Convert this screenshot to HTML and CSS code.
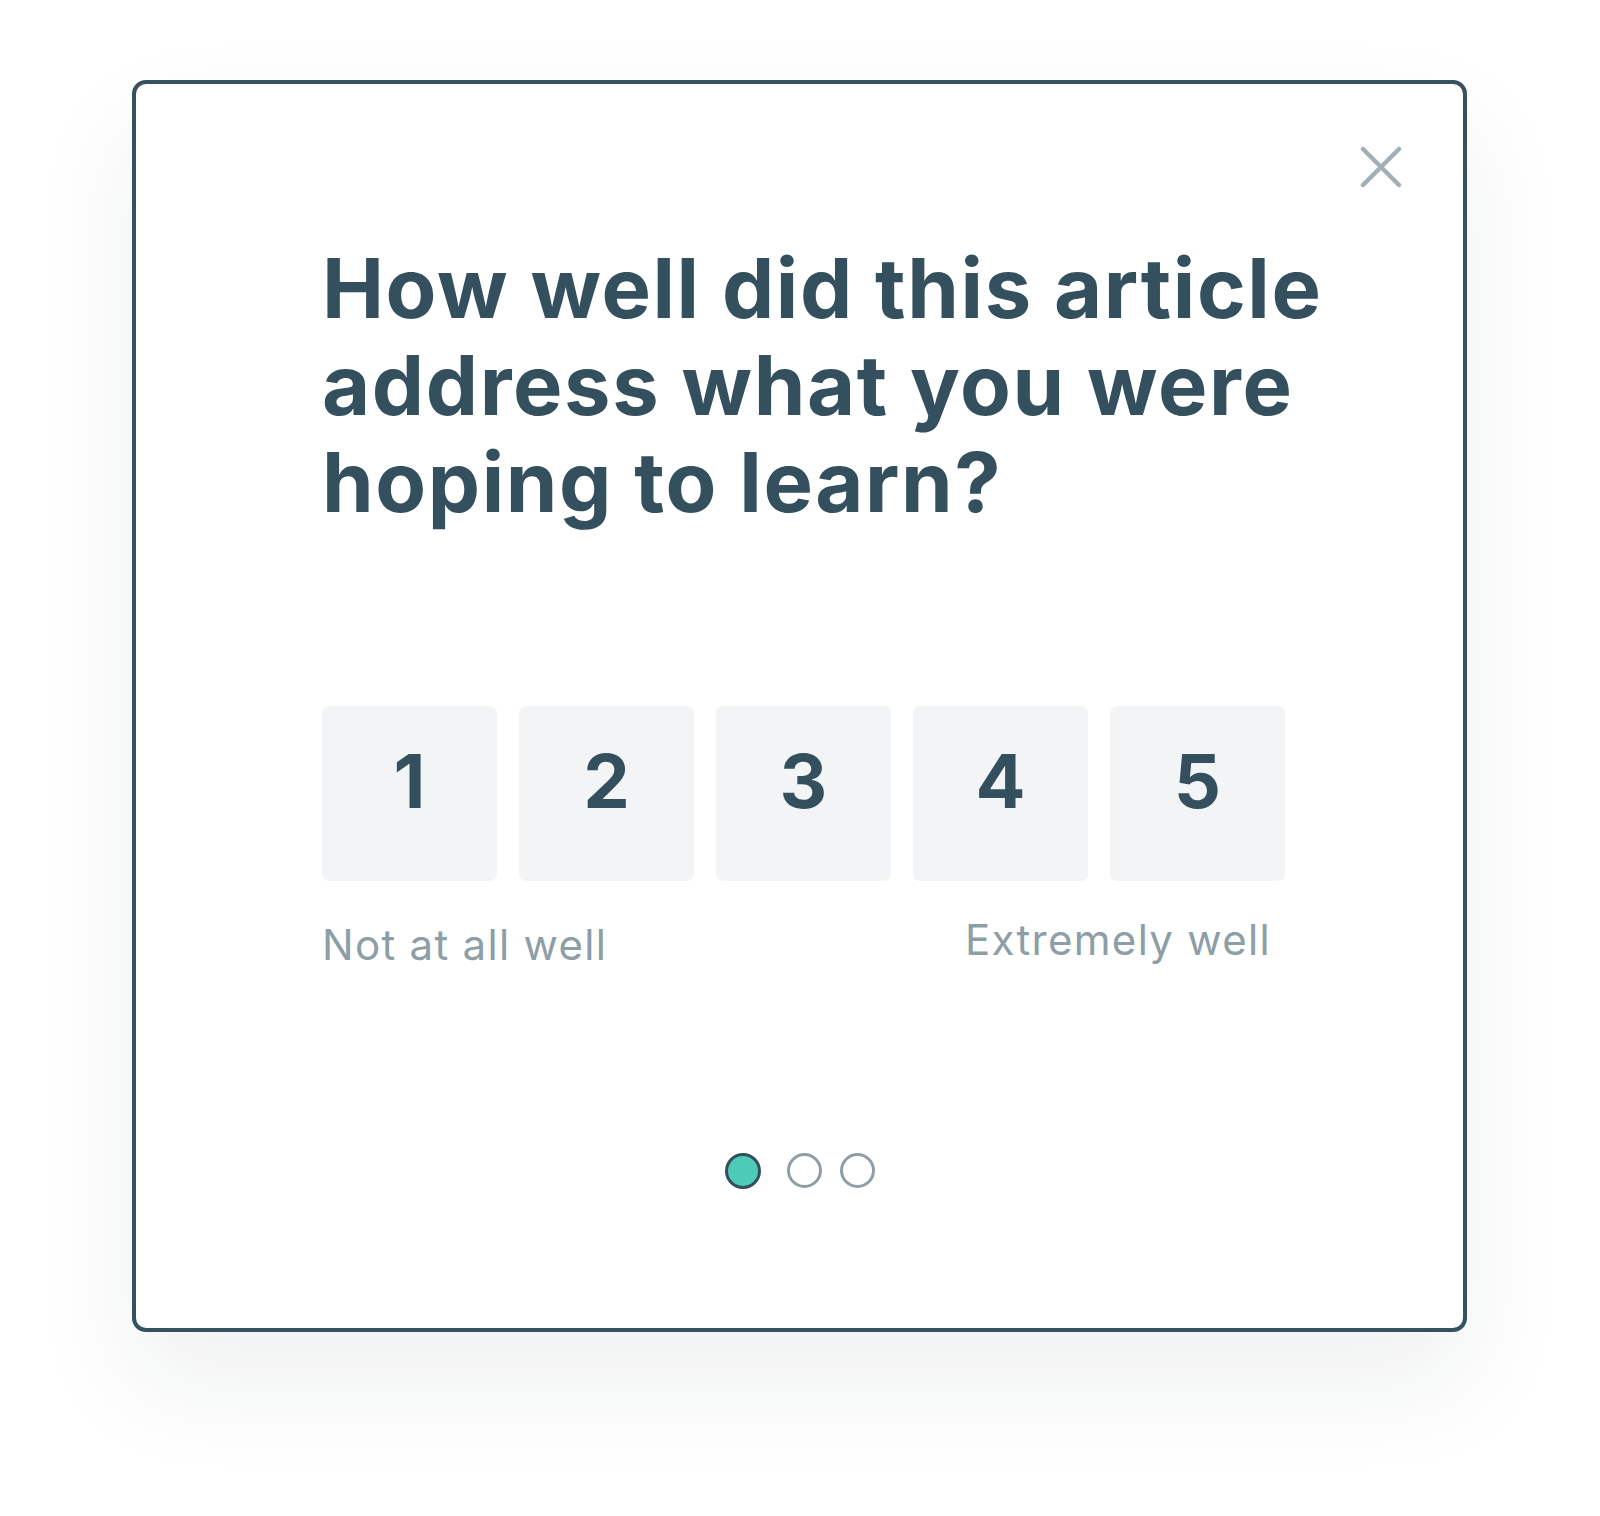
FILE: index.html
```html
<!DOCTYPE html>
<html>
	<head>
		<meta charset="UTF-8">
		<title>Article feedback</title>
		<link rel="stylesheet" href="styles.css">
	</head>
	<body>
		<div class="survey">
			<div class="close">
				<svg width="42" height="42" viewBox="0 0 42 42">
					<path d="M3 3 L39 39 M39 3 L3 39" stroke="#a3afb6" stroke-width="4.5" stroke-linecap="round" fill="none"/>
				</svg>
			</div>
			<h1 class="question">How well did this article<br>address what you were<br>hoping to learn?</h1>
			<div class="scale">
				<div class="score">1</div>
				<div class="score">2</div>
				<div class="score">3</div>
				<div class="score">4</div>
				<div class="score">5</div>
			</div>
			<div class="labels">
				<span class="low">Not at all well</span>
				<span class="high">Extremely well</span>
			</div>
			<div class="steps">
				<i class="active"></i>
				<i></i>
				<i></i>
			</div>
		</div>
	</body>
</html>
```

FILE: styles.css
```css
*{margin:0;padding:0;box-sizing:border-box;}
html,body{height:100%;}
body{
	background:#fff;
	font-family:"Inter","Lato",sans-serif;
	color:#344f5e;
}
.survey{
	position:relative;
	width:1335px;
	height:1252px;
	margin:80px 0 0 132px;
	border:4px solid #36515f;
	border-radius:14px;
	background:#fff;
	box-shadow:0 50px 110px rgba(30,40,60,0.07);
	padding:156px 0 0 186px;
}
.close{
	position:absolute;
	top:62px;
	right:61px;
	width:42px;
	height:42px;
	cursor:pointer;
}
.close svg{display:block;}
.question{
	font-size:83px;
	line-height:97px;
	font-weight:700;
	letter-spacing:1.6px;
}
.scale{
	display:flex;
	gap:22px;
	margin-top:175px;
}
.score{
	width:175px;
	height:175px;
	background:#f3f4f6;
	border-radius:7px;
	font-size:74px;
	font-weight:700;
	text-align:center;
	line-height:150px;
	cursor:pointer;
}
.labels{
	display:flex;
	justify-content:space-between;
	align-items:flex-start;
	width:963px;
	padding-right:14px;
	margin-top:33px;
	font-size:42px;
	letter-spacing:1.3px;
	color:#8d9ea7;
}
.low{margin-top:5px;}
.steps{
	display:flex;
	justify-content:center;
	gap:18px;
	margin-left:-186px;
	margin-top:183px;
}
.steps i{
	display:block;
	width:35px;
	height:35px;
	border:3px solid #8d9ea7;
	border-radius:50%;
}
.steps i.active{
	width:36px;
	height:36px;
	border-color:#344f5e;
	background:#4ecab8;
	margin-right:8px;
}
```
